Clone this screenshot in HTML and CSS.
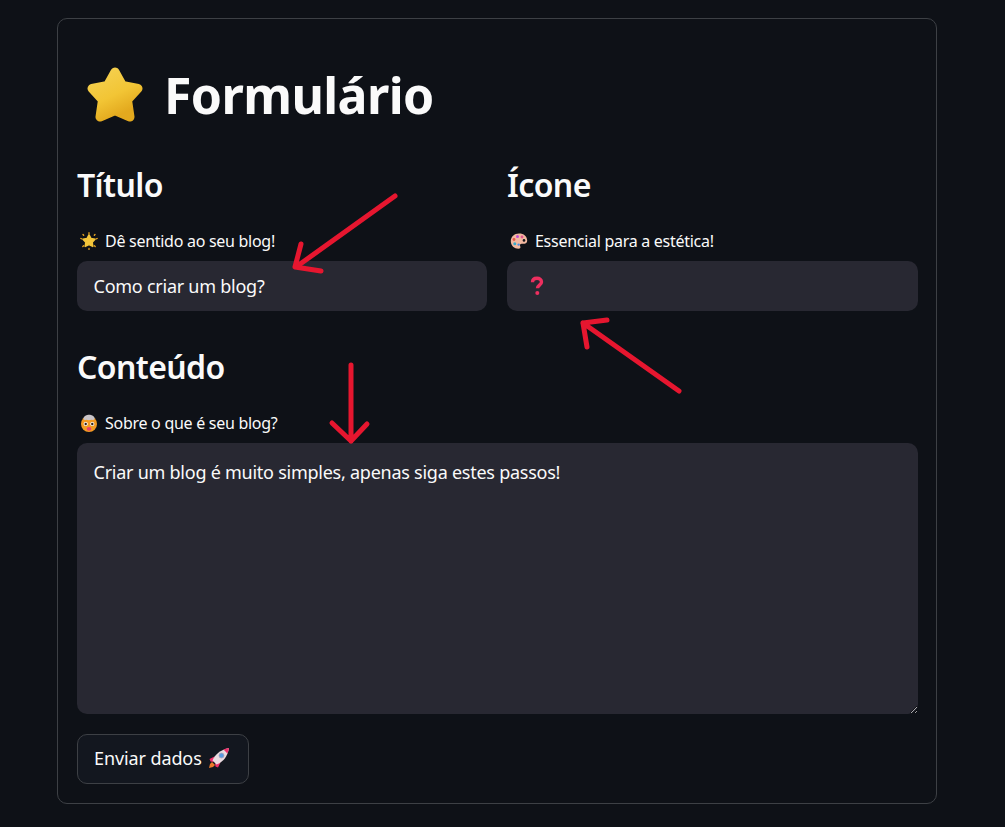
FILE: index.html
```html
<!DOCTYPE html>
<html lang="en">
<head>
    <meta charset="UTF-8">
    <meta name="viewport" content="width=device-width, initial-scale=1.0">
    <title>Formulário</title>
    <link rel="stylesheet" href="styles.css">
</head>
<body>

<form class="card">
    <h1 class="page-title">
        <svg class="star-icon" viewBox="0 0 56 56" aria-hidden="true">
            <defs>
                <linearGradient id="starFill" x1="0" y1="0" x2="0.5" y2="1">
                    <stop offset="0" stop-color="#f5d152"/>
                    <stop offset="0.6" stop-color="#f2c535"/>
                    <stop offset="1" stop-color="#e3a91e"/>
                </linearGradient>
            </defs>
            <polygon points="28,5 35.500,18.500 51,21.500 40.500,33 43,50 28,43.500 13,50 15.500,33 5,21.500 20.500,18.500" fill="url(#starFill)" stroke="url(#starFill)" stroke-width="9" stroke-linejoin="round"/>
        </svg>
        <span>Formulário</span>
    </h1>

    <div class="two-cols">
        <div class="col">
            <h2 class="section-title">Título</h2>
            <label class="field-label" for="titulo">
                <svg class="emoji" viewBox="0 0 18 18" aria-hidden="true">
                    <g stroke="#e8a320" stroke-width="1.300" stroke-linecap="round">
                        <path d="M9 .7v1M9 16.500v1M.8 6.500l1 .3M16.200 6.800l1-.3M3 2.500l.7.8M15 2.500l-.7.8M2.800 14.500l.8-.7M15.200 14.500l-.8-.7"/>
                    </g>
                    <polygon points="9,2.800 11,6.600 15,7.300 12.200,10.300 12.800,14.400 9,12.600 5.200,14.400 5.800,10.300 3,7.300 7,6.600" fill="#f3c53a" stroke="#f3c53a" stroke-width="1.500" stroke-linejoin="round"/>
                </svg>
                Dê sentido ao seu blog!
            </label>
            <input class="field" id="titulo" type="text" value="Como criar um blog?">
        </div>
        <div class="col">
            <h2 class="section-title">Ícone</h2>
            <label class="field-label">
                <svg class="emoji" viewBox="0 0 18 18" aria-hidden="true">
                    <path d="M9 1.500C4.200 1.500.8 4.800.8 9.200c0 4.400 3.600 7.500 7.600 7.500 2 0 2.400-1.200 1.800-2.400-.7-1.400.1-2.600 1.700-2.500 2.500.2 5.300-.1 5.300-3C17.200 4.200 13.800 1.500 9 1.500z" fill="#f2b8a0"/>
                    <circle cx="7.500" cy="4.500" r="1.500" fill="#c34fd0"/>
                    <circle cx="12" cy="5" r="1.400" fill="#e2578f"/>
                    <circle cx="4" cy="7.500" r="1.400" fill="#e8574a"/>
                    <circle cx="4.800" cy="11.700" r="1.500" fill="#39a9c9"/>
                    <circle cx="8.600" cy="12.600" r="1.200" fill="#4f8fe0"/>
                    <circle cx="14" cy="8.400" r="1.300" fill="#16171d"/>
                </svg>
                Essencial para a estética!
            </label>
            <div class="field">
                <svg class="question-icon" viewBox="0 0 14 20" aria-hidden="true">
                    <path d="M2.500 6.200C2.500 3.600 4.400 2.200 7 2.200c2.700 0 4.500 1.500 4.500 3.700 0 3.200-4 3.200-4 6.300" fill="none" stroke="#ee2f5f" stroke-width="3.400"/>
                    <circle cx="7.300" cy="17" r="2" fill="#ee2f5f"/>
                </svg>
            </div>
        </div>
    </div>

    <h2 class="section-title section-title-gap">Conteúdo</h2>
    <label class="field-label" for="conteudo">
        <svg class="emoji" viewBox="0 0 18 18" aria-hidden="true">
            <circle cx="9" cy="10" r="8" fill="#f39a22"/>
            <path d="M3.500 5C3 3 5 2.400 5.800 1.600 7.200.3 11 .3 12.300 1.600c1 .6 2.700 1.400 2.200 3.400-.4 1-2 1.100-3 .8-1.800.5-3.400.5-5 0-1 .3-2.600.2-3-.8z" fill="#c9c4c8"/>
            <circle cx="5.700" cy="10" r="2.100" fill="#fff"/>
            <circle cx="12.300" cy="10" r="2.100" fill="#fff"/>
            <circle cx="5.700" cy="10" r="1.200" fill="#33221a"/>
            <circle cx="12.300" cy="10" r="1.200" fill="#33221a"/>
            <ellipse cx="9" cy="14.800" rx="2.300" ry="1.900" fill="#e9406a"/>
        </svg>
        Sobre o que é seu blog?
    </label>
    <textarea class="field field-area" id="conteudo">Criar um blog é muito simples, apenas siga estes passos!</textarea>

    <button class="submit-btn" type="button">
        Enviar dados
        <svg class="rocket-icon" viewBox="0 0 22 22" aria-hidden="true">
            <path d="M1 21l1-4 2-2 3 3-2 2z" fill="#ee7a2b"/>
            <path d="M6.500 9.500L1.500 12l1 2.500 3 .5zM12.500 15.500L10 20.500l-2.500-1-.5-3z" fill="#ee2f6a"/>
            <path d="M4.500 13.500C7 7.500 12 3 21 1c-1.500 9-6 14-12.500 16.500z" fill="#eadbe0"/>
            <path d="M15.500 2.500C17 2 19.200 1.300 21 1c-.3 1.800-1 4-1.600 5.500z" fill="#ee2f6a"/>
            <circle cx="13.500" cy="8.500" r="2.500" fill="#5a9be0" stroke="#a9a1b4" stroke-width=".8"/>
        </svg>
    </button>
</form>

<!-- setas vermelhas desenhadas por cima do print -->
<svg class="arrows" viewBox="0 0 1005 827" aria-hidden="true">
    <path d="M395 196L296 267M301 244L295 267L321 271"/>
    <path d="M679 391L583 323M607 320L583 323L587 347"/>
    <path d="M351 365V441M332 423L351 441L367 424"/>
</svg>

</body>
</html>
```

FILE: styles.css
```css
body {
    font-family: 'Noto Sans', sans-serif;
    margin: 0;
    padding: 18px 68px 22px 57px;
    background-color: #0e1117;
    color: #fafafa;
    color-scheme: dark;
    position: relative;
}

.card {
    display: block;
    border: 1px solid #3d4045;
    border-radius: 10px;
    padding: 0 18px 19px 19px;
}

.page-title {
    display: flex;
    align-items: center;
    gap: 21px;
    margin: 0;
    padding: 48px 0 0 10px;
    height: 56px;
    font-size: 50px;
    font-weight: 700;
    letter-spacing: -0.6px;
}

.star-icon {
    width: 56px;
    height: 56px;
}

.two-cols {
    display: grid;
    grid-template-columns: 410px 411px;
    gap: 20px;
    margin-top: 40px;
}

.section-title {
    margin: 0;
    height: 44px;
    line-height: 44px;
    font-size: 32px;
    font-weight: 600;
    letter-spacing: -0.6px;
}

.section-title-gap {
    margin-top: 34px;
}

.field-label {
    display: flex;
    align-items: center;
    gap: 7px;
    margin-top: 21px;
    padding-left: 3px;
    height: 26px;
    font-size: 16px;
    letter-spacing: -0.28px;
}

.emoji {
    width: 18px;
    height: 18px;
}

.field {
    display: flex;
    align-items: center;
    box-sizing: border-box;
    width: 100%;
    height: 50px;
    margin-top: 7px;
    padding: 0 17px 0 16.500px;
    border: none;
    border-radius: 10px;
    background-color: #282832;
    color: #fafafa;
    font-family: inherit;
    font-size: 18px;
    letter-spacing: -0.25px;
    outline: none;
}

.question-icon {
    width: 14px;
    height: 20px;
    margin-left: 6px;
}

.field-area {
    display: block;
    height: 271px;
    padding: 16px 17px 16px 16.500px;
    line-height: 26px;
}

.submit-btn {
    display: flex;
    align-items: center;
    gap: 6px;
    box-sizing: border-box;
    width: 172px;
    height: 50px;
    margin-top: 20px;
    padding: 0 0 2px 16px;
    border: 1px solid #3d4045;
    border-radius: 10px;
    background-color: #13171f;
    color: #fafafa;
    font-family: inherit;
    font-size: 18px;
    letter-spacing: -0.1px;
}

.rocket-icon {
    width: 22px;
    height: 22px;
}

.arrows {
    position: absolute;
    top: 0;
    left: 0;
    width: 1005px;
    height: 827px;
    fill: none;
    stroke: #e6162f;
    stroke-width: 5;
    stroke-linecap: round;
    stroke-linejoin: round;
    pointer-events: none;
}
```
